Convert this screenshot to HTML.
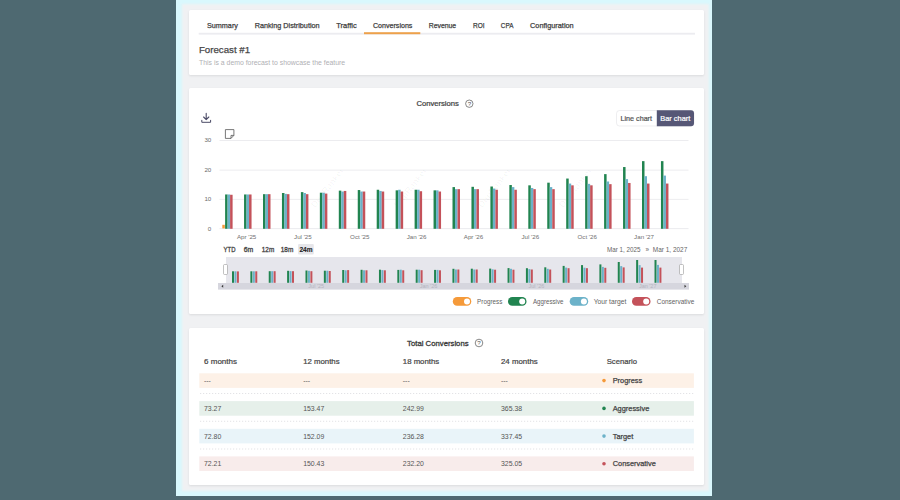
<!DOCTYPE html>
<html><head><meta charset="utf-8"><style>
html,body{margin:0;padding:0;width:900px;height:500px;overflow:hidden;background:#4e6971;font-family:'Liberation Sans', sans-serif;}
.frame{position:absolute;left:176px;top:0;width:536px;height:496px;background:#d9f8fd;overflow:hidden}
.inner{position:absolute;left:6px;top:4px;width:527px;height:487px;background:#f0f1f3;filter:blur(1.2px)}
.card{position:absolute;left:189px;width:515px;background:#fff;border-radius:1.5px;box-shadow:0 1px 2.5px rgba(0,0,0,0.09)}
svg{position:absolute;left:0;top:0}
</style></head><body>
<div class="frame"><div class="inner"></div></div>
<div class="card" style="top:10px;height:64.5px"></div>
<div class="card" style="top:87.6px;height:226.8px"></div>
<div class="card" style="top:327.6px;height:157px"></div>
<svg width="900" height="500" viewBox="0 0 900 500" font-family="'Liberation Sans', sans-serif">
<rect x="198.7" y="32.8" width="496.3" height="1.8" fill="#ececf0"/>
<rect x="364" y="32.2" width="56.3" height="2" fill="#eda14b"/>
<text x="207" y="28.4" font-size="7.4" fill="#3e3e3e" font-weight="400" text-anchor="start" textLength="30.9" lengthAdjust="spacingAndGlyphs" stroke="#3e3e3e" stroke-width="0.25">Summary</text>
<text x="254.7" y="28.4" font-size="7.4" fill="#3e3e3e" font-weight="400" text-anchor="start" textLength="64.9" lengthAdjust="spacingAndGlyphs" stroke="#3e3e3e" stroke-width="0.25">Ranking Distribution</text>
<text x="336.3" y="28.4" font-size="7.4" fill="#3e3e3e" font-weight="400" text-anchor="start" textLength="20.4" lengthAdjust="spacingAndGlyphs" stroke="#3e3e3e" stroke-width="0.25">Traffic</text>
<text x="373" y="28.4" font-size="7.4" fill="#3e3e3e" font-weight="400" text-anchor="start" textLength="39.4" lengthAdjust="spacingAndGlyphs" stroke="#3e3e3e" stroke-width="0.25">Conversions</text>
<text x="428.7" y="28.4" font-size="7.4" fill="#3e3e3e" font-weight="400" text-anchor="start" textLength="27.5" lengthAdjust="spacingAndGlyphs" stroke="#3e3e3e" stroke-width="0.25">Revenue</text>
<text x="473" y="28.4" font-size="7.4" fill="#3e3e3e" font-weight="400" text-anchor="start" textLength="11.6" lengthAdjust="spacingAndGlyphs" stroke="#3e3e3e" stroke-width="0.25">ROI</text>
<text x="500.8" y="28.4" font-size="7.4" fill="#3e3e3e" font-weight="400" text-anchor="start" textLength="12.6" lengthAdjust="spacingAndGlyphs" stroke="#3e3e3e" stroke-width="0.25">CPA</text>
<text x="530" y="28.4" font-size="7.4" fill="#3e3e3e" font-weight="400" text-anchor="start" textLength="43.699999999999996" lengthAdjust="spacingAndGlyphs" stroke="#3e3e3e" stroke-width="0.25">Configuration</text>
<text x="198.9" y="53.1" font-size="9.6" fill="#484848" font-weight="400" text-anchor="start" textLength="51.2" lengthAdjust="spacingAndGlyphs" stroke="#484848" stroke-width="0.25">Forecast #1</text>
<text x="199" y="65.0" font-size="6.7" fill="#b0b0b4" font-weight="400" text-anchor="start" textLength="146.2" lengthAdjust="spacingAndGlyphs">This is a demo forecast to showcase the feature</text>
<text x="416.4" y="105.9" font-size="6.8" fill="#444" font-weight="400" text-anchor="start" textLength="42.5" lengthAdjust="spacingAndGlyphs" stroke="#444" stroke-width="0.22">Conversions</text>
<circle cx="469.3" cy="103.7" r="3.7" fill="none" stroke="#555" stroke-width="0.7"/>
<text x="469.4" y="106.0" font-size="6.2" fill="#555" text-anchor="middle">?</text>
<g stroke="#4a4a66" stroke-width="1.1" fill="none" stroke-linecap="round" stroke-linejoin="round"><path d="M206.2 113.4v6.2M203.6 117l2.6 2.6 2.6-2.6"/><path d="M201.8 120.3v2h8.8v-2" stroke-width="1"/></g>
<g stroke="#555" stroke-width="0.8" fill="none" stroke-linejoin="round"><path d="M225.4 129.6h8.5v5.8l-2.9 3h-5.6z M233.9 135.4h-2.9v3"/></g>
<rect x="616.5" y="110.5" width="77.5" height="15.5" rx="3" fill="#fff" stroke="#e2e2e6" stroke-width="0.6"/>
<path d="M656.8 110.3h34.2a3 3 0 0 1 3 3v9.9a3 3 0 0 1 -3 3h-34.2z" fill="#565776"/>
<text x="620.5" y="121" font-size="6.5" fill="#555" font-weight="400" text-anchor="start" textLength="31.5" lengthAdjust="spacingAndGlyphs" stroke="#555" stroke-width="0.2">Line chart</text>
<text x="660.3" y="121" font-size="6.5" fill="#fff" font-weight="400" text-anchor="start" textLength="30" lengthAdjust="spacingAndGlyphs" stroke="#fff" stroke-width="0.2">Bar chart</text>
<rect x="219.5" y="198.90" width="469" height="0.8" fill="#e8e8ec"/>
<rect x="219.5" y="169.70" width="469" height="0.8" fill="#e8e8ec"/>
<rect x="219.5" y="140.20" width="469" height="0.8" fill="#e8e8ec"/>
<rect x="219.5" y="228.3" width="469" height="0.8" fill="#e6e6ea"/>
<text x="211.3" y="230.5" font-size="6.2" fill="#6a6a6a" font-weight="400" text-anchor="end">0</text>
<text x="211.3" y="201.10000000000002" font-size="6.2" fill="#6a6a6a" font-weight="400" text-anchor="end">10</text>
<text x="211.3" y="171.9" font-size="6.2" fill="#6a6a6a" font-weight="400" text-anchor="end">20</text>
<text x="211.3" y="142.4" font-size="6.2" fill="#6a6a6a" font-weight="400" text-anchor="end">30</text>
<g transform="translate(328,188) rotate(-52)"><text x="0" y="2.5" font-size="9" fill="#000" fill-opacity="0.035" text-anchor="middle" font-weight="700">DigiRanker</text></g>
<g transform="translate(411,188) rotate(-52)"><text x="0" y="2.5" font-size="9" fill="#000" fill-opacity="0.035" text-anchor="middle" font-weight="700">DigiRanker</text></g>
<g transform="translate(495,188) rotate(-52)"><text x="0" y="2.5" font-size="9" fill="#000" fill-opacity="0.035" text-anchor="middle" font-weight="700">DigiRanker</text></g>
<g transform="translate(576,188) rotate(-52)"><text x="0" y="2.5" font-size="9" fill="#000" fill-opacity="0.035" text-anchor="middle" font-weight="700">DigiRanker</text></g>
<rect x="225.10" y="194.47" width="2.5" height="34.33" fill="#218450"/>
<rect x="227.60" y="194.47" width="2.5" height="34.33" fill="#6cb2c9"/>
<rect x="230.10" y="194.77" width="2.5" height="34.03" fill="#c4525a"/>
<rect x="244.05" y="194.47" width="2.5" height="34.33" fill="#218450"/>
<rect x="246.55" y="194.47" width="2.5" height="34.33" fill="#6cb2c9"/>
<rect x="249.05" y="194.47" width="2.5" height="34.33" fill="#c4525a"/>
<rect x="263.00" y="194.18" width="2.5" height="34.62" fill="#218450"/>
<rect x="265.50" y="194.18" width="2.5" height="34.62" fill="#6cb2c9"/>
<rect x="268.00" y="194.18" width="2.5" height="34.62" fill="#c4525a"/>
<rect x="281.95" y="193.00" width="2.5" height="35.80" fill="#218450"/>
<rect x="284.45" y="193.88" width="2.5" height="34.91" fill="#6cb2c9"/>
<rect x="286.95" y="194.18" width="2.5" height="34.62" fill="#c4525a"/>
<rect x="300.90" y="192.12" width="2.5" height="36.69" fill="#218450"/>
<rect x="303.40" y="193.00" width="2.5" height="35.80" fill="#6cb2c9"/>
<rect x="305.90" y="194.18" width="2.5" height="34.62" fill="#c4525a"/>
<rect x="319.85" y="192.71" width="2.5" height="36.09" fill="#218450"/>
<rect x="322.35" y="192.71" width="2.5" height="36.09" fill="#6cb2c9"/>
<rect x="324.85" y="193.59" width="2.5" height="35.21" fill="#c4525a"/>
<rect x="338.80" y="190.64" width="2.5" height="38.16" fill="#218450"/>
<rect x="341.30" y="191.53" width="2.5" height="37.27" fill="#6cb2c9"/>
<rect x="343.80" y="190.94" width="2.5" height="37.87" fill="#c4525a"/>
<rect x="357.75" y="190.05" width="2.5" height="38.75" fill="#218450"/>
<rect x="360.25" y="191.53" width="2.5" height="37.27" fill="#6cb2c9"/>
<rect x="362.75" y="191.53" width="2.5" height="37.27" fill="#c4525a"/>
<rect x="376.70" y="189.75" width="2.5" height="39.05" fill="#218450"/>
<rect x="379.20" y="190.94" width="2.5" height="37.87" fill="#6cb2c9"/>
<rect x="381.70" y="191.53" width="2.5" height="37.27" fill="#c4525a"/>
<rect x="395.65" y="190.34" width="2.5" height="38.46" fill="#218450"/>
<rect x="398.15" y="189.75" width="2.5" height="39.05" fill="#6cb2c9"/>
<rect x="400.65" y="191.53" width="2.5" height="37.27" fill="#c4525a"/>
<rect x="414.60" y="189.75" width="2.5" height="39.05" fill="#218450"/>
<rect x="417.10" y="189.75" width="2.5" height="39.05" fill="#6cb2c9"/>
<rect x="419.60" y="191.23" width="2.5" height="37.57" fill="#c4525a"/>
<rect x="433.55" y="190.34" width="2.5" height="38.46" fill="#218450"/>
<rect x="436.05" y="190.34" width="2.5" height="38.46" fill="#6cb2c9"/>
<rect x="438.55" y="191.53" width="2.5" height="37.27" fill="#c4525a"/>
<rect x="452.50" y="187.10" width="2.5" height="41.70" fill="#218450"/>
<rect x="455.00" y="189.16" width="2.5" height="39.64" fill="#6cb2c9"/>
<rect x="457.50" y="189.16" width="2.5" height="39.64" fill="#c4525a"/>
<rect x="471.45" y="186.81" width="2.5" height="41.99" fill="#218450"/>
<rect x="473.95" y="189.16" width="2.5" height="39.64" fill="#6cb2c9"/>
<rect x="476.45" y="189.16" width="2.5" height="39.64" fill="#c4525a"/>
<rect x="490.40" y="186.51" width="2.5" height="42.29" fill="#218450"/>
<rect x="492.90" y="188.57" width="2.5" height="40.23" fill="#6cb2c9"/>
<rect x="495.40" y="189.75" width="2.5" height="39.05" fill="#c4525a"/>
<rect x="509.35" y="185.03" width="2.5" height="43.77" fill="#218450"/>
<rect x="511.85" y="187.10" width="2.5" height="41.70" fill="#6cb2c9"/>
<rect x="514.35" y="189.75" width="2.5" height="39.05" fill="#c4525a"/>
<rect x="528.30" y="185.33" width="2.5" height="43.47" fill="#218450"/>
<rect x="530.80" y="187.99" width="2.5" height="40.81" fill="#6cb2c9"/>
<rect x="533.30" y="189.16" width="2.5" height="39.64" fill="#c4525a"/>
<rect x="547.25" y="182.68" width="2.5" height="46.12" fill="#218450"/>
<rect x="549.75" y="187.10" width="2.5" height="41.70" fill="#6cb2c9"/>
<rect x="552.25" y="189.16" width="2.5" height="39.64" fill="#c4525a"/>
<rect x="566.20" y="178.55" width="2.5" height="50.25" fill="#218450"/>
<rect x="568.70" y="183.56" width="2.5" height="45.24" fill="#6cb2c9"/>
<rect x="571.20" y="185.33" width="2.5" height="43.47" fill="#c4525a"/>
<rect x="585.15" y="176.19" width="2.5" height="52.62" fill="#218450"/>
<rect x="587.65" y="183.86" width="2.5" height="44.95" fill="#6cb2c9"/>
<rect x="590.15" y="185.33" width="2.5" height="43.47" fill="#c4525a"/>
<rect x="604.10" y="174.12" width="2.5" height="54.68" fill="#218450"/>
<rect x="606.60" y="181.50" width="2.5" height="47.30" fill="#6cb2c9"/>
<rect x="609.10" y="184.15" width="2.5" height="44.65" fill="#c4525a"/>
<rect x="623.05" y="167.04" width="2.5" height="61.76" fill="#218450"/>
<rect x="625.55" y="179.13" width="2.5" height="49.66" fill="#6cb2c9"/>
<rect x="628.05" y="182.97" width="2.5" height="45.83" fill="#c4525a"/>
<rect x="642.00" y="161.14" width="2.5" height="67.66" fill="#218450"/>
<rect x="644.50" y="176.19" width="2.5" height="52.62" fill="#6cb2c9"/>
<rect x="647.00" y="183.56" width="2.5" height="45.24" fill="#c4525a"/>
<rect x="660.95" y="161.14" width="2.5" height="67.66" fill="#218450"/>
<rect x="663.45" y="175.59" width="2.5" height="53.20" fill="#6cb2c9"/>
<rect x="665.95" y="183.56" width="2.5" height="45.24" fill="#c4525a"/>
<rect x="222.3" y="224.8" width="2.5" height="3.6" fill="#f59a3a"/>
<text x="246.6" y="239.3" font-size="6.2" fill="#707070" font-weight="400" text-anchor="middle">Apr '25</text>
<text x="302.9" y="239.3" font-size="6.2" fill="#707070" font-weight="400" text-anchor="middle">Jul '25</text>
<text x="359.8" y="239.3" font-size="6.2" fill="#707070" font-weight="400" text-anchor="middle">Oct '25</text>
<text x="416.6" y="239.3" font-size="6.2" fill="#707070" font-weight="400" text-anchor="middle">Jan '26</text>
<text x="473.5" y="239.3" font-size="6.2" fill="#707070" font-weight="400" text-anchor="middle">Apr '26</text>
<text x="530.3" y="239.3" font-size="6.2" fill="#707070" font-weight="400" text-anchor="middle">Jul '26</text>
<text x="587.2" y="239.3" font-size="6.2" fill="#707070" font-weight="400" text-anchor="middle">Oct '26</text>
<text x="644.0" y="239.3" font-size="6.2" fill="#707070" font-weight="400" text-anchor="middle">Jan '27</text>
<rect x="298.1" y="244" width="15.7" height="10.4" rx="1" fill="#e6e6ea"/>
<text x="223.6" y="252.1" font-size="6.8" fill="#444" font-weight="400" text-anchor="start" textLength="11.9" lengthAdjust="spacingAndGlyphs" stroke="#444" stroke-width="0.3">YTD</text>
<text x="243.7" y="252.1" font-size="6.8" fill="#444" font-weight="400" text-anchor="start" textLength="9.5" lengthAdjust="spacingAndGlyphs" stroke="#444" stroke-width="0.3">6m</text>
<text x="261.8" y="252.1" font-size="6.8" fill="#444" font-weight="400" text-anchor="start" textLength="12.4" lengthAdjust="spacingAndGlyphs" stroke="#444" stroke-width="0.3">12m</text>
<text x="280.8" y="252.1" font-size="6.8" fill="#444" font-weight="400" text-anchor="start" textLength="12.5" lengthAdjust="spacingAndGlyphs" stroke="#444" stroke-width="0.3">18m</text>
<text x="299.4" y="252.1" font-size="6.8" fill="#222" font-weight="700" text-anchor="start" textLength="13.100000000000001" lengthAdjust="spacingAndGlyphs" stroke="#222" stroke-width="0.1">24m</text>
<text x="607" y="251.8" font-size="6.6" fill="#666" font-weight="400" text-anchor="start" textLength="33.6" lengthAdjust="spacingAndGlyphs">Mar 1, 2025</text>
<text x="645.4" y="251.8" font-size="6.4" fill="#666" font-weight="400" text-anchor="start">»</text>
<text x="652.8" y="251.8" font-size="6.6" fill="#666" font-weight="400" text-anchor="start" textLength="34.5" lengthAdjust="spacingAndGlyphs">Mar 1, 2027</text>
<rect x="218" y="257" width="471" height="26" fill="#fff"/>
<rect x="226" y="257" width="456" height="26" fill="#e6e6ec"/>
<rect x="232.00" y="271.30" width="2" height="11.50" fill="#218450"/>
<rect x="234.45" y="271.30" width="2" height="11.50" fill="#6cb2c9"/>
<rect x="236.90" y="271.40" width="2" height="11.40" fill="#c4525a"/>
<rect x="250.37" y="271.30" width="2" height="11.50" fill="#218450"/>
<rect x="252.82" y="271.30" width="2" height="11.50" fill="#6cb2c9"/>
<rect x="255.27" y="271.30" width="2" height="11.50" fill="#c4525a"/>
<rect x="268.74" y="271.20" width="2" height="11.60" fill="#218450"/>
<rect x="271.19" y="271.20" width="2" height="11.60" fill="#6cb2c9"/>
<rect x="273.64" y="271.20" width="2" height="11.60" fill="#c4525a"/>
<rect x="287.11" y="270.80" width="2" height="12.00" fill="#218450"/>
<rect x="289.56" y="271.10" width="2" height="11.70" fill="#6cb2c9"/>
<rect x="292.01" y="271.20" width="2" height="11.60" fill="#c4525a"/>
<rect x="305.48" y="270.50" width="2" height="12.30" fill="#218450"/>
<rect x="307.93" y="270.80" width="2" height="12.00" fill="#6cb2c9"/>
<rect x="310.38" y="271.20" width="2" height="11.60" fill="#c4525a"/>
<rect x="323.85" y="270.70" width="2" height="12.10" fill="#218450"/>
<rect x="326.30" y="270.70" width="2" height="12.10" fill="#6cb2c9"/>
<rect x="328.75" y="271.00" width="2" height="11.80" fill="#c4525a"/>
<rect x="342.22" y="270.00" width="2" height="12.80" fill="#218450"/>
<rect x="344.67" y="270.30" width="2" height="12.50" fill="#6cb2c9"/>
<rect x="347.12" y="270.10" width="2" height="12.70" fill="#c4525a"/>
<rect x="360.59" y="269.80" width="2" height="13.00" fill="#218450"/>
<rect x="363.04" y="270.30" width="2" height="12.50" fill="#6cb2c9"/>
<rect x="365.49" y="270.30" width="2" height="12.50" fill="#c4525a"/>
<rect x="378.96" y="269.70" width="2" height="13.10" fill="#218450"/>
<rect x="381.41" y="270.10" width="2" height="12.70" fill="#6cb2c9"/>
<rect x="383.86" y="270.30" width="2" height="12.50" fill="#c4525a"/>
<rect x="397.33" y="269.90" width="2" height="12.90" fill="#218450"/>
<rect x="399.78" y="269.70" width="2" height="13.10" fill="#6cb2c9"/>
<rect x="402.23" y="270.30" width="2" height="12.50" fill="#c4525a"/>
<rect x="415.70" y="269.70" width="2" height="13.10" fill="#218450"/>
<rect x="418.15" y="269.70" width="2" height="13.10" fill="#6cb2c9"/>
<rect x="420.60" y="270.20" width="2" height="12.60" fill="#c4525a"/>
<rect x="434.07" y="269.90" width="2" height="12.90" fill="#218450"/>
<rect x="436.52" y="269.90" width="2" height="12.90" fill="#6cb2c9"/>
<rect x="438.97" y="270.30" width="2" height="12.50" fill="#c4525a"/>
<rect x="452.44" y="268.80" width="2" height="14.00" fill="#218450"/>
<rect x="454.89" y="269.50" width="2" height="13.30" fill="#6cb2c9"/>
<rect x="457.34" y="269.50" width="2" height="13.30" fill="#c4525a"/>
<rect x="470.81" y="268.70" width="2" height="14.10" fill="#218450"/>
<rect x="473.26" y="269.50" width="2" height="13.30" fill="#6cb2c9"/>
<rect x="475.71" y="269.50" width="2" height="13.30" fill="#c4525a"/>
<rect x="489.18" y="268.60" width="2" height="14.20" fill="#218450"/>
<rect x="491.63" y="269.30" width="2" height="13.50" fill="#6cb2c9"/>
<rect x="494.08" y="269.70" width="2" height="13.10" fill="#c4525a"/>
<rect x="507.55" y="268.10" width="2" height="14.70" fill="#218450"/>
<rect x="510.00" y="268.80" width="2" height="14.00" fill="#6cb2c9"/>
<rect x="512.45" y="269.70" width="2" height="13.10" fill="#c4525a"/>
<rect x="525.92" y="268.20" width="2" height="14.60" fill="#218450"/>
<rect x="528.37" y="269.10" width="2" height="13.70" fill="#6cb2c9"/>
<rect x="530.82" y="269.50" width="2" height="13.30" fill="#c4525a"/>
<rect x="544.29" y="267.30" width="2" height="15.50" fill="#218450"/>
<rect x="546.74" y="268.80" width="2" height="14.00" fill="#6cb2c9"/>
<rect x="549.19" y="269.50" width="2" height="13.30" fill="#c4525a"/>
<rect x="562.66" y="265.90" width="2" height="16.90" fill="#218450"/>
<rect x="565.11" y="267.60" width="2" height="15.20" fill="#6cb2c9"/>
<rect x="567.56" y="268.20" width="2" height="14.60" fill="#c4525a"/>
<rect x="581.03" y="265.10" width="2" height="17.70" fill="#218450"/>
<rect x="583.48" y="267.70" width="2" height="15.10" fill="#6cb2c9"/>
<rect x="585.93" y="268.20" width="2" height="14.60" fill="#c4525a"/>
<rect x="599.40" y="264.40" width="2" height="18.40" fill="#218450"/>
<rect x="601.85" y="266.90" width="2" height="15.90" fill="#6cb2c9"/>
<rect x="604.30" y="267.80" width="2" height="15.00" fill="#c4525a"/>
<rect x="617.77" y="262.00" width="2" height="20.80" fill="#218450"/>
<rect x="620.22" y="266.10" width="2" height="16.70" fill="#6cb2c9"/>
<rect x="622.67" y="267.40" width="2" height="15.40" fill="#c4525a"/>
<rect x="636.14" y="260.00" width="2" height="22.80" fill="#218450"/>
<rect x="638.59" y="265.10" width="2" height="17.70" fill="#6cb2c9"/>
<rect x="641.04" y="267.60" width="2" height="15.20" fill="#c4525a"/>
<rect x="654.51" y="260.00" width="2" height="22.80" fill="#218450"/>
<rect x="656.96" y="264.90" width="2" height="17.90" fill="#6cb2c9"/>
<rect x="659.41" y="267.60" width="2" height="15.20" fill="#c4525a"/>
<rect x="218" y="283" width="471" height="6.6" fill="#d6d6de"/>
<path d="M223.2 284.8v3l-1.8-1.5z" fill="#333"/>
<text x="316.2" y="288" font-size="5.5" fill="#b4b4be" font-weight="400" text-anchor="middle">Jul '25</text>
<text x="428.5" y="288" font-size="5.5" fill="#b4b4be" font-weight="400" text-anchor="middle">Jan '26</text>
<text x="536.4" y="288" font-size="5.5" fill="#b4b4be" font-weight="400" text-anchor="middle">Jul '26</text>
<text x="647.7" y="288" font-size="5.5" fill="#b4b4be" font-weight="400" text-anchor="middle">Jan '27</text>
<path d="M684.5 284.8v3l1.8-1.5z" fill="#333"/>
<rect x="223.5" y="264.5" width="4" height="10" rx="1" fill="#fff" stroke="#999" stroke-width="0.6"/>
<rect x="679.5" y="264.5" width="4" height="10" rx="1" fill="#fff" stroke="#999" stroke-width="0.6"/>
<rect x="452.8" y="297.1" width="18.5" height="8.6" rx="4.3" fill="#f59a3a"/>
<circle cx="467.0" cy="301.4" r="3" fill="#fff"/>
<text x="477.1" y="303.8" font-size="6.8" fill="#626262" font-weight="400" text-anchor="start" textLength="25.2" lengthAdjust="spacingAndGlyphs">Progress</text>
<rect x="508" y="297.1" width="18.5" height="8.6" rx="4.3" fill="#218450"/>
<circle cx="522.2" cy="301.4" r="3" fill="#fff"/>
<text x="532.9" y="303.8" font-size="6.8" fill="#626262" font-weight="400" text-anchor="start" textLength="30.6" lengthAdjust="spacingAndGlyphs">Aggressive</text>
<rect x="569.7" y="297.1" width="18.5" height="8.6" rx="4.3" fill="#6cb2c9"/>
<circle cx="583.9000000000001" cy="301.4" r="3" fill="#fff"/>
<text x="593.7" y="303.8" font-size="6.8" fill="#626262" font-weight="400" text-anchor="start" textLength="32.599999999999994" lengthAdjust="spacingAndGlyphs">Your target</text>
<rect x="632" y="297.1" width="18.5" height="8.6" rx="4.3" fill="#c4525a"/>
<circle cx="646.2" cy="301.4" r="3" fill="#fff"/>
<text x="656.8" y="303.8" font-size="6.8" fill="#626262" font-weight="400" text-anchor="start" textLength="37.5" lengthAdjust="spacingAndGlyphs">Conservative</text>
<text x="407.1" y="345.9" font-size="7.5" fill="#3a3a3a" font-weight="400" text-anchor="start" textLength="61.5" lengthAdjust="spacingAndGlyphs" stroke="#3a3a3a" stroke-width="0.3">Total Conversions</text>
<circle cx="479" cy="343" r="3.8" fill="none" stroke="#555" stroke-width="0.7"/>
<text x="479.1" y="345.4" font-size="6.2" fill="#555" text-anchor="middle">?</text>
<text x="204.1" y="364.1" font-size="7.4" fill="#474747" font-weight="400" text-anchor="start" textLength="32.9" lengthAdjust="spacingAndGlyphs" stroke="#474747" stroke-width="0.22">6 months</text>
<text x="303.2" y="364.1" font-size="7.4" fill="#474747" font-weight="400" text-anchor="start" textLength="36.4" lengthAdjust="spacingAndGlyphs" stroke="#474747" stroke-width="0.22">12 months</text>
<text x="402.8" y="364.1" font-size="7.4" fill="#474747" font-weight="400" text-anchor="start" textLength="36.4" lengthAdjust="spacingAndGlyphs" stroke="#474747" stroke-width="0.22">18 months</text>
<text x="501" y="364.1" font-size="7.4" fill="#474747" font-weight="400" text-anchor="start" textLength="36.699999999999996" lengthAdjust="spacingAndGlyphs" stroke="#474747" stroke-width="0.22">24 months</text>
<text x="606.7" y="364.1" font-size="7.4" fill="#474747" font-weight="400" text-anchor="start" textLength="30.3" lengthAdjust="spacingAndGlyphs" stroke="#474747" stroke-width="0.22">Scenario</text>
<rect x="199.3" y="373.3" width="494.6" height="14.6" fill="#fdf1e7"/>
<text x="204" y="383.3" font-size="6.9" fill="#555" font-weight="400" text-anchor="start">---</text>
<text x="303.2" y="383.3" font-size="6.9" fill="#555" font-weight="400" text-anchor="start">---</text>
<text x="402.8" y="383.3" font-size="6.9" fill="#555" font-weight="400" text-anchor="start">---</text>
<text x="501" y="383.3" font-size="6.9" fill="#555" font-weight="400" text-anchor="start">---</text>
<circle cx="604" cy="380.6" r="1.8" fill="#f59a3a"/>
<text x="612.7" y="382.90000000000003" font-size="7.4" fill="#444" font-weight="400" text-anchor="start" stroke="#444" stroke-width="0.25">Progress</text>
<line x1="200" y1="393.5" x2="694" y2="393.5" stroke="#dcdce0" stroke-width="0.8" stroke-dasharray="1.2 1.8"/>
<rect x="199.3" y="401.1" width="494.6" height="14.6" fill="#e6f0ea"/>
<text x="204" y="411.1" font-size="6.9" fill="#555" font-weight="400" text-anchor="start">73.27</text>
<text x="303.2" y="411.1" font-size="6.9" fill="#555" font-weight="400" text-anchor="start">153.47</text>
<text x="402.8" y="411.1" font-size="6.9" fill="#555" font-weight="400" text-anchor="start">242.99</text>
<text x="501" y="411.1" font-size="6.9" fill="#555" font-weight="400" text-anchor="start">365.38</text>
<circle cx="604" cy="408.40000000000003" r="1.8" fill="#218450"/>
<text x="612.7" y="410.90000000000003" font-size="7.4" fill="#444" font-weight="400" text-anchor="start" stroke="#444" stroke-width="0.25">Aggressive</text>
<line x1="200" y1="421.3" x2="694" y2="421.3" stroke="#dcdce0" stroke-width="0.8" stroke-dasharray="1.2 1.8"/>
<rect x="199.3" y="428.8" width="494.6" height="14.6" fill="#e9f4f9"/>
<text x="204" y="438.8" font-size="6.9" fill="#555" font-weight="400" text-anchor="start">72.80</text>
<text x="303.2" y="438.8" font-size="6.9" fill="#555" font-weight="400" text-anchor="start">152.09</text>
<text x="402.8" y="438.8" font-size="6.9" fill="#555" font-weight="400" text-anchor="start">236.28</text>
<text x="501" y="438.8" font-size="6.9" fill="#555" font-weight="400" text-anchor="start">337.45</text>
<circle cx="604" cy="436.1" r="1.8" fill="#6cb2c9"/>
<text x="612.7" y="438.6" font-size="7.4" fill="#444" font-weight="400" text-anchor="start" stroke="#444" stroke-width="0.25">Target</text>
<line x1="200" y1="449.0" x2="694" y2="449.0" stroke="#dcdce0" stroke-width="0.8" stroke-dasharray="1.2 1.8"/>
<rect x="199.3" y="456.4" width="494.6" height="14.6" fill="#f8eceb"/>
<text x="204" y="466.4" font-size="6.9" fill="#555" font-weight="400" text-anchor="start">72.21</text>
<text x="303.2" y="466.4" font-size="6.9" fill="#555" font-weight="400" text-anchor="start">150.43</text>
<text x="402.8" y="466.4" font-size="6.9" fill="#555" font-weight="400" text-anchor="start">232.20</text>
<text x="501" y="466.4" font-size="6.9" fill="#555" font-weight="400" text-anchor="start">325.05</text>
<circle cx="604" cy="463.7" r="1.8" fill="#c4525a"/>
<text x="612.7" y="466.2" font-size="7.4" fill="#444" font-weight="400" text-anchor="start" stroke="#444" stroke-width="0.25">Conservative</text>
</svg>
</body></html>
